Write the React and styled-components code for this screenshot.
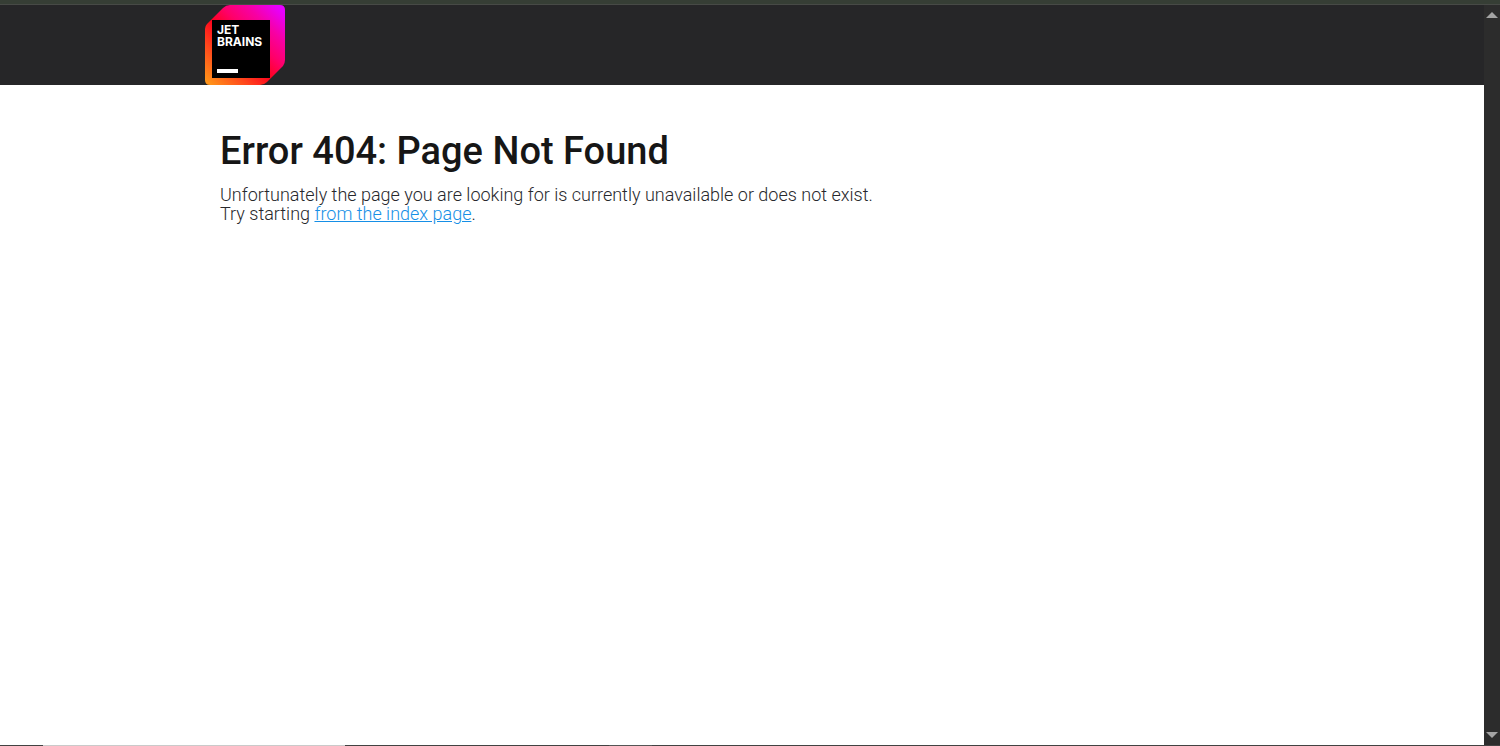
import React from 'react'
import styled, { createGlobalStyle } from 'styled-components'

const colors = {
  frame: '#363e35',
  frameEdge: '#474a46',
  header: '#262628',
  track: '#2c2c2c',
  arrow: '#a3a3a3',
  taskbar: '#424242',
  heading: '#161616',
  text: '#27282c',
  link: '#168fe6'
}

const GlobalStyle = createGlobalStyle`
  body {
    margin: 0;
    background: #ffffff;
    font-family: Roboto, 'Liberation Sans', sans-serif;
  }
`

const Screen = styled.div`
  height: 100vh;
  display: flex;
  flex-direction: column;
`

const FrameTop = styled.div`
  height: 4px;
  background: ${colors.frame};
  border-bottom: 1px solid ${colors.frameEdge};
`

const Viewport = styled.div`
  flex: 1;
  display: flex;
  min-height: 0;
`

const Page = styled.div`
  flex: 1;
  background: #ffffff;
`

const Header = styled.header`
  height: 80px;
  background: ${colors.header};
`

const Container = styled.div`
  max-width: 1076px;
  margin: 0 auto;
`

const LogoLink = styled.a`
  display: block;
  width: 82px;
  height: 80px;

  svg {
    display: block;
  }
`

const Content = styled.main`
  padding: 40px 16px;
`

const Title = styled.h1`
  margin: 0;
  color: ${colors.heading};
  font-size: 38px;
  font-weight: 500;
  line-height: 52px;
`

const Message = styled.p`
  margin: 8px 0 0;
  color: ${colors.text};
  font-size: 18px;
  font-weight: 300;
  line-height: 19px;
`

const IndexLink = styled.a`
  color: ${colors.link};
  text-decoration: underline;
`

const Track = styled.div`
  width: 16px;
  display: flex;
  flex-direction: column;
  justify-content: space-between;
  background: ${colors.track};
`

const ArrowButton = styled.button`
  width: 16px;
  height: 20px;
  padding: 0;
  border: 0;
  background: transparent;

  svg {
    display: block;
    margin: 0 auto;
    transform: ${props => (props.$down ? 'rotate(180deg)' : 'none')};
  }
`

const Taskbar = styled.div`
  height: 1px;
  display: flex;
  background: ${colors.taskbar};
`

const TaskbarItem = styled.div`
  width: ${props => props.$width};
  margin-left: ${props => props.$gap};
  background: ${props => props.$color};
`

const Logo = () => (
  <svg width='82' height='80' viewBox='0 0 82 80' role='img' aria-label='JetBrains'>
    <defs>
      <linearGradient id='cube' gradientUnits='userSpaceOnUse' x1='4' y1='78' x2='76' y2='4'>
        <stop offset='0' stopColor='#ff9419' />
        <stop offset='0.26' stopColor='#ff451c' />
        <stop offset='0.46' stopColor='#ff021d' />
        <stop offset='0.62' stopColor='#ff0068' />
        <stop offset='0.8' stopColor='#f700a4' />
        <stop offset='1' stopColor='#e600ff' />
      </linearGradient>
    </defs>
    <path
      d='M1 24Q1 21 3 19L19 3Q22 0 26 0H76Q81 0 81 5V55Q81 58 79 61L63 77Q60 80 56 80H6Q1 80 1 75Z'
      fill='url(#cube)'
    />
    <rect x='8' y='15' width='58' height='58' fill='#000000' />
    <g fill='#ffffff' fontFamily='Inter, sans-serif' fontSize='12' fontWeight='700'>
      <text x='13' y='29'>JET</text>
      <text x='13' y='41'>BRAINS</text>
    </g>
    <rect x='13' y='64' width='21' height='4' fill='#ffffff' />
  </svg>
)

const ScrollArrow = ({ down, label }) => (
  <ArrowButton type='button' aria-label={label} $down={down}>
    <svg width='12' height='6' viewBox='0 0 12 6'>
      <path d='M6 0L12 6H0Z' fill={colors.arrow} />
    </svg>
  </ArrowButton>
)

const App = () => (
  <>
    <GlobalStyle />
    <Screen>
      <FrameTop />
      <Viewport>
        <Page>
          <Header>
            <Container>
              <LogoLink href='#home'>
                <Logo />
              </LogoLink>
            </Container>
          </Header>
          <Container>
            <Content>
              <Title>Error 404: Page Not Found</Title>
              <Message>
                Unfortunately the page you are looking for is currently unavailable or does not exist.
                <br />
                Try starting <IndexLink href='#index'>from the index page</IndexLink>.
              </Message>
            </Content>
          </Container>
        </Page>
        <Track>
          <ScrollArrow label='Scroll up' />
          <ScrollArrow label='Scroll down' down />
        </Track>
      </Viewport>
      <Taskbar>
        <TaskbarItem $gap='43px' $width='302px' $color='#cacaca' />
        <TaskbarItem $gap='264px' $width='43px' $color='#555555' />
      </Taskbar>
    </Screen>
  </>
)

export default App
